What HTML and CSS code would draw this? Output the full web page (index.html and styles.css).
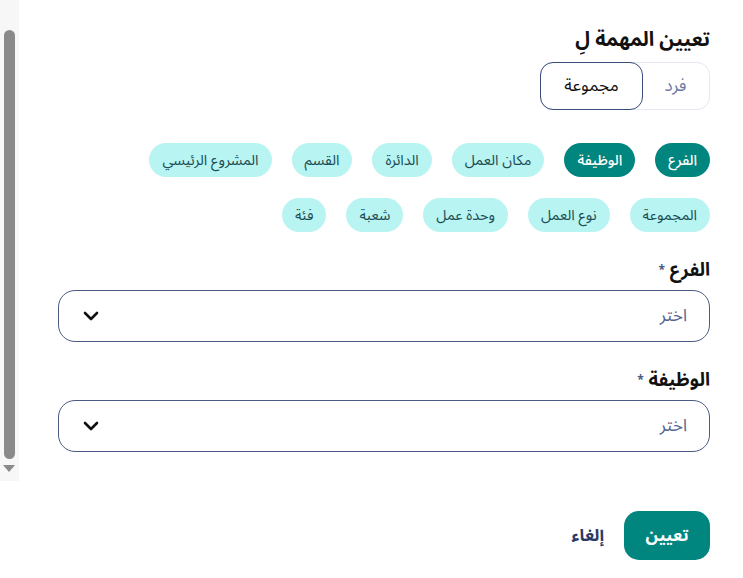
FILE: index.html
```html
<!DOCTYPE html>
<html lang="ar">
<head>
<meta charset="utf-8">
<link rel="stylesheet" href="styles.css">
</head>
<body>
<div class="page">
  <div class="scroll">
    <div class="thumb"></div>
    <div class="arrow"></div>
  </div>
  <main class="content" dir="rtl">
    <h1 class="title">تعيين المهمة لِ</h1>
    <div class="toggle">
      <span class="opt">فرد</span>
      <span class="opt active">مجموعة</span>
    </div>
    <div class="chips">
      <span class="chip on">الفرع</span>
      <span class="chip on">الوظيفة</span>
      <span class="chip">مكان العمل</span>
      <span class="chip">الدائرة</span>
      <span class="chip">القسم</span>
      <span class="chip">المشروع الرئيسي</span>
    </div>
    <div class="chips row2">
      <span class="chip">المجموعة</span>
      <span class="chip">نوع العمل</span>
      <span class="chip">وحدة عمل</span>
      <span class="chip">شعبة</span>
      <span class="chip">فئة</span>
    </div>
    <div class="field">
      <label class="label">الفرع <span class="req">*</span></label>
      <div class="select">
        <span class="ph">اختر</span>
        <svg class="chev" width="16" height="10" viewBox="0 0 16 10"><path d="M2 2 L8 8 L14 2" fill="none" stroke="#111" stroke-width="2.6" stroke-linecap="round" stroke-linejoin="round"/></svg>
      </div>
    </div>
    <div class="field second">
      <label class="label">الوظيفة <span class="req">*</span></label>
      <div class="select">
        <span class="ph">اختر</span>
        <svg class="chev" width="16" height="10" viewBox="0 0 16 10"><path d="M2 2 L8 8 L14 2" fill="none" stroke="#111" stroke-width="2.6" stroke-linecap="round" stroke-linejoin="round"/></svg>
      </div>
    </div>
    <div class="actions">
      <button class="primary">تعيين</button>
      <button class="cancel">إلغاء</button>
    </div>
  </main>
</div>
</body>
</html>
```
FILE: styles.css
```css
* { box-sizing: border-box; }
html, body { margin: 0; padding: 0; background: #fff; }
body { font-family: "Noto Sans Arabic", "DejaVu Sans", sans-serif; color: #111; }
.page { display: flex; flex-direction: row; width: 743px; height: 578px; overflow: hidden; }
.scroll { width: 19px; height: 481px; background: #f7f7f7; flex: none; display: flex; flex-direction: column; align-items: center; padding-top: 30px; }
.thumb { width: 11px; height: 429px; background: #8a8a8a; border-radius: 6px; margin-left: -1px; }
.arrow { width: 0; height: 0; border-left: 6px solid transparent; border-right: 6px solid transparent; border-top: 7px solid #8a8a8a; margin-top: 6px; margin-left: -1px; }
.content { flex: 1; margin-left: 39px; margin-right: 33px; padding-top: 26px; }
.title { margin: 0; font-size: 20px; font-weight: 700; line-height: 28px; text-align: right; }
.toggle { display: flex; width: 170px; height: 48px; margin-top: 8px; border: 1px solid #e4e8f4; border-radius: 13px; }
.opt { display: flex; align-items: center; justify-content: center; font-size: 17px; color: #6b78a3; flex: 1; }
.opt.active { flex: none; width: 103px; margin: -1px; border: 1px solid #3a4c7c; border-radius: 13px; color: #111; }
.chips { display: flex; gap: 20px; margin-top: 33px; }
.chips.row2 { margin-top: 21px; }
.chip { height: 34px; padding: 0 13px; border-radius: 17px; background: #b8f4f2; color: #1b4d53; font-size: 14.5px; display: flex; align-items: center; white-space: nowrap; }
.chip.on { background: #00857f; color: #fff; font-weight: 500; }
.field { margin-top: 26px; }
.field.second { margin-top: 26px; }
.label { display: block; font-size: 18.5px; font-weight: 700; line-height: 26px; }
.req { font-size: 12px; color: #4a5a85; vertical-align: top; font-weight: 700; }
.select { margin-top: 6px; height: 52px; border: 1px solid #4a5a82; border-radius: 17px; display: flex; align-items: center; justify-content: space-between; padding: 0 22px 0 24px; }
.ph { font-size: 17px; color: #55648d; }
.chev { display: block; }
.actions { display: flex; align-items: center; gap: 20px; margin-top: 59px; }
.primary { height: 49px; width: 86px; border: none; border-radius: 15px; background: #00857f; color: #fff; font-family: inherit; font-size: 17px; font-weight: 700; }
.cancel { border: none; background: none; padding: 0; color: #2b3a67; font-family: inherit; font-size: 17px; font-weight: 700; }
```
